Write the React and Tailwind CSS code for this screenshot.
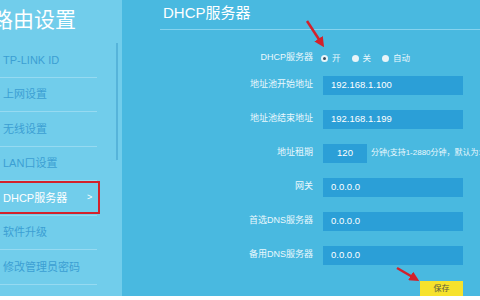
import React from "react";

const font = { fontFamily: '"Liberation Sans", "Noto Sans CJK SC", sans-serif' };

const menu = ["TP-LINK ID", "上网设置", "无线设置", "LAN口设置", "DHCP服务器", "软件升级", "修改管理员密码"];

function Row({ label, children }) {
  return (
    <div className="flex h-[34px] items-center">
      <div className="w-[153px] pr-0 text-right text-[9px] text-[#eaf8fd]">{label}</div>
      <div className="ml-[10px] flex items-center">{children}</div>
    </div>
  );
}

function Field({ value, w = "w-[140px]", center = false }) {
  return (
    <div className={`${w} flex h-[19px] items-center bg-[#2b9fd7] text-[9.5px] text-white ${center ? "justify-center" : "pl-[8px]"}`}>
      {value}
    </div>
  );
}

function Radio({ checked, label }) {
  return (
    <div className="flex items-center gap-[4px]">
      <span className="flex h-[7px] w-[7px] items-center justify-center rounded-full bg-[#e8f4f8]">
        {checked && <span className="h-[3px] w-[3px] rounded-full bg-[#3a5060]" />}
      </span>
      <span className="text-[8.5px] text-[#eaf8fd]">{label}</span>
    </div>
  );
}

export default function App() {
  return (
    <div className="relative h-[300px] w-[480px] overflow-hidden bg-white" style={font}>
      <div className="flex h-[296px]">
        {/* sidebar */}
        <div className="relative w-[122px] shrink-0 bg-[#71cdeb]">
          <div className="ml-[-8px] pt-[7px] text-[21px] leading-[26px] text-white">路由设置</div>
          <div className="mt-[10px] w-[97px]">
            {menu.map((m) => {
              const active = m === "DHCP服务器";
              return (
                <div
                  key={m}
                  className={`relative flex h-[34.5px] items-center border-b border-[#96daf1] pl-[3px] text-[11px] ${
                    active ? "text-white" : "text-[#3c9fd3]"
                  }`}
                >
                  {m}
                  {active && (
                    <>
                      <span className="absolute left-[87px] text-[9px] text-white">&gt;</span>
                      <span className="absolute left-[-4px] top-[0px] h-[33px] w-[104px] border-[2.5px] border-[#d3212b]" />
                    </>
                  )}
                </div>
              );
            })}
          </div>
          <div className="absolute left-[116px] top-[43px] h-[117px] w-[2px] bg-[#56b4da]" />
        </div>
        {/* main */}
        <div className="flex flex-1 flex-col bg-[#49b9e0] pl-[38px]">
          <div className="flex h-[30px] items-center border-b border-[#86d3ee] pl-[3px] pb-[2px] text-[15px] text-white">
            DHCP服务器
          </div>
          <div className="mt-[18px] flex h-[20px] items-center">
            <div className="w-[153px] text-right text-[9px] text-[#eaf8fd]">DHCP服务器</div>
            <div className="ml-[8px] flex items-center gap-[11px]">
              <Radio checked label="开" />
              <Radio label="关" />
              <Radio label="自动" />
            </div>
          </div>
          <Row label="地址池开始地址"><Field value="192.168.1.100" /></Row>
          <Row label="地址池结束地址"><Field value="192.168.1.199" /></Row>
          <Row label="地址租期">
            <Field value="120" w="w-[44px]" center />
            <span className="ml-[4px] whitespace-nowrap text-[8px] text-[#eaf8fd]">分钟(支持1-2880分钟，默认为120分钟)</span>
          </Row>
          <Row label="网关"><Field value="0.0.0.0" /></Row>
          <Row label="首选DNS服务器"><Field value="0.0.0.0" /></Row>
          <Row label="备用DNS服务器"><Field value="0.0.0.0" /></Row>
          <div className="ml-[260px] mt-[9px] flex h-[15px] w-[43px] items-center justify-center bg-[#f6e22c] text-[8px] text-[#5a5a40]">
            保存
          </div>
        </div>
      </div>
      {/* annotation arrows */}
      <svg className="absolute left-0 top-0" width="480" height="300" viewBox="0 0 480 300">
        <defs>
          <marker id="ah" markerWidth="4" markerHeight="4" refX="2.5" refY="2" orient="auto" markerUnits="strokeWidth">
            <path d="M0,0 L4,2 L0,4 Z" fill="#d3212b" />
          </marker>
        </defs>
        <line x1="307" y1="21" x2="322" y2="44" stroke="#d3212b" strokeWidth="2.5" markerEnd="url(#ah)" />
        <line x1="397" y1="268" x2="416" y2="279" stroke="#d3212b" strokeWidth="2.5" markerEnd="url(#ah)" />
      </svg>
    </div>
  );
}
